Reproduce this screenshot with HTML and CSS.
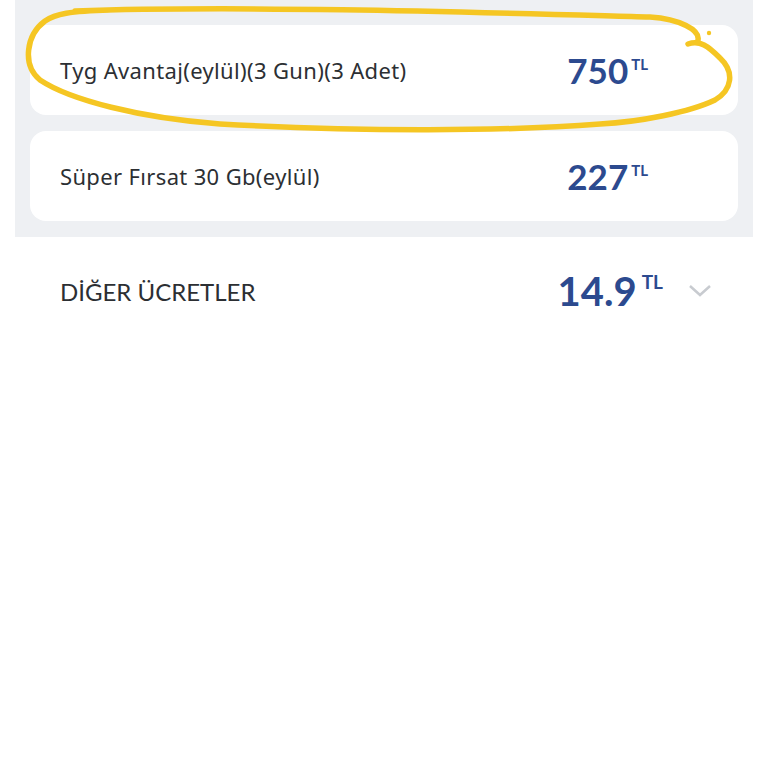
FILE: index.html
```html
<!DOCTYPE html>
<html lang="tr">
<head>
    <meta charset="UTF-8">
    <meta name="viewport" content="width=device-width, initial-scale=1.0">
    <title>Ek Paketler</title>
    <link rel="stylesheet" href="styles.css">
</head>
<body>

    <!-- paket listesi -->
    <div class="package-panel">
        <div class="package-card">
            <span class="package-name">Tyg Avantaj(eylül)(3 Gun)(3 Adet)</span>
            <span class="price">750<sup>TL</sup></span>
        </div>
        <div class="package-card">
            <span class="package-name">Süper Fırsat 30 Gb(eylül)</span>
            <span class="price">227<sup>TL</sup></span>
        </div>

        <!-- kullanıcının çizdiği işaret -->
        <svg class="marker" width="768" height="140" viewBox="0 0 768 140">
            <path d="M75 11 C250 5 500 13 650 17 C680 19 700 30 698 40 M688 44 C700 40 708 46 720 58 C735 72 732 90 715 100 C690 112 640 122 600 124 C500 132 350 131 220 124 C140 118 70 100 40 80 C22 65 26 35 45 21 C55 14 70 11 110 10"/>
            <circle cx="709" cy="33" r="2.2"/>
        </svg>
    </div>

    <!-- diğer ücretler -->
    <div class="other-row">
        <span class="other-title">DİĞER ÜCRETLER</span>
        <span class="price price-big">14.9<sup>TL</sup></span>
        <svg class="chevron" width="24" height="14" viewBox="0 0 24 14">
            <path d="M2 2 L12 11 L22 2"/>
        </svg>
    </div>

</body>
</html>
```

FILE: styles.css
```css
/* genel */
body {
    margin: 0;
    background-color: #ffffff;
    font-family: 'Lato', 'Noto Sans', sans-serif;
    color: #2c2f33;
}

/* gri panel */
.package-panel {
    position: relative;
    margin: 0 15px;
    padding: 25px 15px 16px;
    background-color: #eef0f3;
    display: flex;
    flex-direction: column;
    gap: 16px;
}

.package-card {
    height: 90px;
    background-color: #ffffff;
    border-radius: 16px;
    display: flex;
    align-items: center;
    padding: 0 90px 0 30px;
}

.package-name {
    flex: 1;
    font-family: 'Noto Sans', sans-serif;
    font-size: 22px;
    letter-spacing: 0.35px;
}

/* fiyat */
.price {
    font-size: 35px;
    font-weight: 700;
    color: #2c4a8f;
    line-height: 1;
}
.price sup {
    font-size: 15px;
    margin-left: 3px;
    vertical-align: 14px;
}

/* sarı işaret */
.marker {
    position: absolute;
    left: -15px;
    top: 0;
    pointer-events: none;
}
.marker path {
    fill: none;
    stroke: #f5c623;
    stroke-width: 5.5;
    stroke-linecap: round;
}
.marker circle {
    fill: #f5c623;
}

/* diğer ücretler satırı */
.other-row {
    display: flex;
    align-items: center;
    padding: 34px 56px 0 60px;
}
.other-title {
    flex: 1;
    font-size: 24px;
}
.price-big {
    font-size: 40px;
}
.price-big sup {
    font-size: 19px;
    margin-left: 5px;
    vertical-align: 17px;
}
.chevron {
    margin-left: 25px;
}
.chevron path {
    fill: none;
    stroke: #c8cbd0;
    stroke-width: 2.5;
}
```
